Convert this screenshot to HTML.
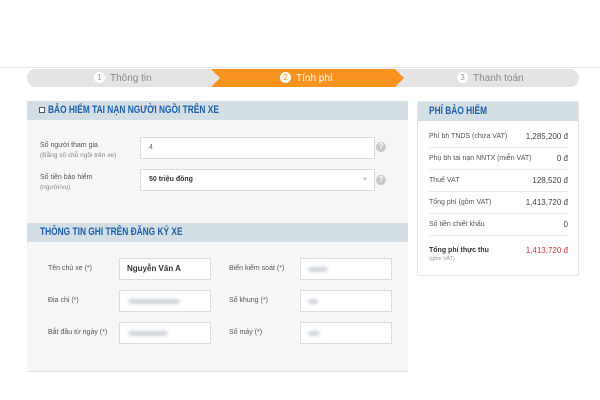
<!DOCTYPE html>
<html><head><meta charset="utf-8"><style>
*{margin:0;padding:0;box-sizing:border-box}
body{width:600px;height:400px;background:#fff;font-family:"Liberation Sans",sans-serif;position:relative;overflow:hidden;color:#555}
.a{position:absolute}
.topline{left:0;top:67px;width:600px;height:1px;background:#e6e6e6}
.steps{left:27px;top:69px;width:552px;height:18px;background:#e4e4e4;border-radius:9px}
.st{font-size:10px;color:#888;top:72px}
.num{display:inline-block;width:11px;height:11px;border-radius:50%;background:#fff;color:#999;font-size:8px;text-align:center;line-height:11px;margin-right:5px;vertical-align:1px}
.panel{left:27px;top:101px;width:381px;height:271px;background:#f6f6f6;border-bottom:1px solid #e2e2e2}
.hd{background:#d3dee5;height:19px;color:#1f5fa8;font-weight:bold;font-size:11px;line-height:19px;padding-left:13px;position:absolute}
.hd b{display:inline-block;transform:scaleX(.76);transform-origin:0 50%;white-space:nowrap}
.lb{font-size:7px;color:#555}
.sm{font-size:6.5px;color:#888}
.in{background:#fff;border:1px solid #dcdcdc;position:absolute;font-size:8px;color:#333;padding-left:8px}
.blur{position:absolute;height:5px;border-radius:3px;background:#cfd3dc;filter:blur(1.5px)}
.q{position:absolute;width:10px;height:10px;border-radius:50%;background:#c8c8c8;color:#fff;font-size:8px;font-weight:bold;text-align:center;line-height:10px}
.rp{left:417px;top:101px;width:162px;height:175px;background:#fff;border:1px solid #e6e6e6;border-radius:2px}
.row{position:absolute;left:11px;width:139px;font-size:7px;color:#555;border-bottom:1px solid #ececec;height:22px;line-height:22px}
.row span{position:absolute;right:0;top:0;font-size:8px;color:#444}
</style></head><body>
<div class="a topline"></div>
<div class="a steps"></div>
<svg class="a" style="left:211px;top:69px" width="194" height="18"><polygon points="0,0 184,0 193,9 184,18 0,18 9,9" fill="#f7931e"/></svg>
<div class="a st" style="left:94px"><span class="num">1</span>Thông tin</div>
<div class="a st" style="left:280px;color:#fff"><span class="num" style="color:#f7931e">2</span>Tính phí</div>
<div class="a st" style="left:457px"><span class="num">3</span>Thanh toán</div>

<div class="a panel">
 <div class="hd" style="left:0;top:0;width:381px;padding-left:12px"><span style="display:inline-block;width:6px;height:6px;border:1px solid #555;background:#fff;margin-right:3px;vertical-align:0"></span><b>BẢO HIỂM TAI NẠN NGƯỜI NGỒI TRÊN XE</b></div>
 <div class="hd" style="left:0;top:122px;width:381px"><b>THÔNG TIN GHI TRÊN ĐĂNG KÝ XE</b></div>
</div>
<div class="a lb" style="left:40px;top:142px">Số người tham gia</div>
<div class="a sm" style="left:40px;top:152px">(Bằng số chỗ ngồi trên xe)</div>
<div class="in" style="left:140px;top:137px;width:235px;height:22px;line-height:20px;font-size:7px;color:#666">4</div>
<div class="q" style="left:376px;top:142px">?</div>
<div class="a lb" style="left:40px;top:174px">Số tiền bảo hiểm</div>
<div class="a sm" style="left:40px;top:184px">(người/vụ)</div>
<div class="in" style="left:140px;top:169px;width:235px;height:22px;line-height:20px;font-weight:bold;font-size:7px">50 triệu đồng<span style="position:absolute;right:6px;color:#bbb;font-size:6px;font-weight:normal">▼</span></div>
<div class="q" style="left:376px;top:175px">?</div>

<div class="a lb" style="left:48px;top:265px">Tên chủ xe (*)</div>
<div class="a lb" style="left:48px;top:297px">Địa chỉ (*)</div>
<div class="a lb" style="left:48px;top:329px">Bắt đầu từ ngày (*)</div>
<div class="a lb" style="left:229px;top:265px">Biển kiểm soát (*)</div>
<div class="a lb" style="left:229px;top:297px">Số khung (*)</div>
<div class="a lb" style="left:229px;top:329px">Số máy (*)</div>
<div class="in" style="left:119px;top:258px;width:92px;height:22px;line-height:20px;font-weight:bold;padding-left:7px">Nguyễn Văn A</div>
<div class="in" style="left:119px;top:290px;width:92px;height:22px"></div><div class="blur" style="left:128px;top:299px;width:52px"></div>
<div class="in" style="left:119px;top:322px;width:92px;height:22px"></div><div class="blur" style="left:128px;top:331px;width:40px"></div>
<div class="in" style="left:300px;top:258px;width:92px;height:22px"></div><div class="blur" style="left:308px;top:267px;width:20px"></div>
<div class="in" style="left:300px;top:290px;width:92px;height:22px"></div><div class="blur" style="left:308px;top:299px;width:10px"></div>
<div class="in" style="left:300px;top:322px;width:92px;height:22px"></div><div class="blur" style="left:308px;top:331px;width:12px"></div>

<div class="a rp">
 <div class="hd" style="left:0;top:0;width:160px;padding-left:11px"><b>PHÍ BẢO HIỂM</b></div>
 <div class="row" style="top:24px">Phí bh TNDS (chưa VAT)<span>1,285,200 đ</span></div>
 <div class="row" style="top:46px">Phụ bh tai nạn NNTX (miễn VAT)<span>0 đ</span></div>
 <div class="row" style="top:68px">Thuế VAT<span>128,520 đ</span></div>
 <div class="row" style="top:90px">Tổng phí (gồm VAT)<span>1,413,720 đ</span></div>
 <div class="row" style="top:112px">Số tiền chiết khấu<span>0</span></div>
 <div class="row" style="top:140px;border:none;font-weight:bold;color:#333;line-height:9px;padding-top:4px">Tổng phí thực thu<span style="color:#d0343f;font-weight:normal;top:4px;line-height:9px">1,413,720 đ</span><div style="font-size:5.5px;color:#999;font-weight:normal">(gồm VAT)</div></div>
</div>
</body></html>
